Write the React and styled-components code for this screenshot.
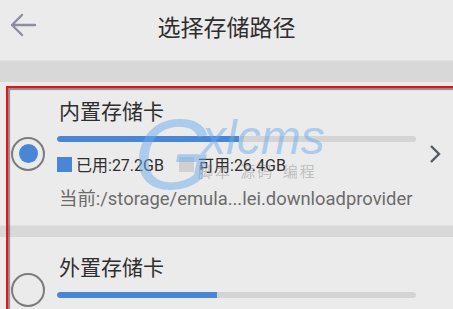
import React from "react";
import styled, { createGlobalStyle } from "styled-components";

const GlobalStyle = createGlobalStyle`
  html, body {
    margin: 0;
    padding: 0;
    background: #ebebeb;
    overflow: hidden;
  }
  body {
    font-family: Roboto, "Noto Sans CJK SC", sans-serif;
    color: #333;
  }
`;

const Page = styled.div`
  position: relative;
  width: 453px;
  height: 309px;
  overflow: hidden;
  background: #ebebeb;
`;

const Header = styled.div`
  display: grid;
  grid-template-columns: 60px 1fr 60px;
  align-items: center;
  height: 60px;
  background: #ebebeb;
`;

const BackButton = styled.div`
  display: flex;
  align-items: center;
  padding-left: 9px;
  height: 100%;
  margin-top: -10px;
`;

const Title = styled.div`
  text-align: center;
  font-size: 23px;
  color: #2e2e2e;
  margin-top: -8px;
`;

const Band = styled.div`
  height: ${(p) => p.h}px;
  background: #d8d8d8;
  border-top: 1px solid #e2e2e2;
  box-sizing: border-box;
`;

const Item = styled.div`
  display: flex;
  align-items: center;
  padding: 0 11px 0 11px;
  background: #ebebeb;
`;

const Radio = styled.div`
  flex: none;
  width: 30px;
  height: 30px;
  border-radius: 50%;
  border: 2px solid #7c7c80;
  display: flex;
  align-items: center;
  justify-content: center;
  &::after {
    content: "";
    display: ${(p) => (p.checked ? "block" : "none")};
    width: 19px;
    height: 19px;
    border-radius: 50%;
    background: #4a86d6;
  }
`;

const Body = styled.div`
  flex: 1;
  margin-left: 12px;
  padding: ${(p) => p.top}px 0 12px;
  min-width: 0;
`;

const Name = styled.div`
  font-size: 21px;
  line-height: 30px;
  color: #2e2e2e;
  padding-left: 2px;
  margin-top: 1px;
`;

const Track = styled.div`
  margin-top: 9px;
  height: 6px;
  border-radius: 3px;
  background: #d4d4d4;
  overflow: hidden;
`;

const Fill = styled.div`
  height: 100%;
  background: #4a86d6;
  border-radius: 3px 0 0 3px;
`;

const Legend = styled.div`
  display: flex;
  align-items: center;
  margin-top: 11px;
  height: 22px;
  font-size: 16px;
  color: #2e2e2e;
`;

const LegendEntry = styled.div`
  display: flex;
  align-items: center;
  width: ${(p) => p.w}px;
  gap: 4px;
`;

const Swatch = styled.span`
  width: 15px;
  height: 15px;
  background: ${(p) => p.color};
`;

const Path = styled.div`
  margin-top: 10px;
  font-size: 18.4px;
  line-height: 28px;
  color: #6b6b6b;
  padding-left: 2px;
  white-space: nowrap;
`;

const ChevronSlot = styled.div`
  flex: none;
  margin-left: 12px;
  width: 14px;
  height: 20px;
`;

const Watermark = styled.div`
  position: absolute;
  left: 130px;
  top: 100px;
  width: 200px;
  height: 90px;
  pointer-events: none;
  font-family: "Liberation Sans", sans-serif;
  font-style: italic;
  color: rgba(105, 172, 235, 0.5);
`;

const WmGlyph = styled.span`
  position: absolute;
  left: ${(p) => p.x}px;
  top: ${(p) => p.y}px;
  font-size: ${(p) => p.size}px;
  line-height: ${(p) => p.size}px;
  white-space: nowrap;
`;

const WmSub = styled.span`
  position: absolute;
  left: 68px;
  top: 61px;
  font-family: "Noto Sans CJK SC", sans-serif;
  font-style: normal;
  font-size: 15px;
  line-height: 20px;
  letter-spacing: 2px;
  word-spacing: 3px;
  white-space: nowrap;
  color: rgba(120, 120, 120, 0.4);
`;

const Highlight = styled.div`
  position: absolute;
  left: 6px;
  top: 86px;
  width: 470px;
  height: 260px;
  border: 2px solid #e8131b;
  box-shadow: inset 2px 2px 1px rgba(60, 60, 60, 0.55);
  pointer-events: none;
`;

function StorageItem({ name, used, total, legend, path, checked, top, arrow }) {
  return (
    <Item>
      <Radio checked={checked} />
      <Body top={top}>
        <Name>{name}</Name>
        <Track>
          <Fill style={{ width: `${(used / total) * 100}%` }} />
        </Track>
        {legend && (
          <Legend>
            <LegendEntry w={122}>
              <Swatch color="#4a86d6" />
              {legend[0]}
            </LegendEntry>
            <LegendEntry w={120}>
              <Swatch color="#d0d0d0" />
              {legend[1]}
            </LegendEntry>
          </Legend>
        )}
        {path && <Path>{path}</Path>}
      </Body>
      <ChevronSlot>
        {arrow && (
          <svg width="14" height="20" viewBox="0 0 14 20">
            <polyline points="3,2 11,10 3,18" fill="none" stroke="#555a66" strokeWidth="2.4" />
          </svg>
        )}
      </ChevronSlot>
    </Item>
  );
}

export default function App() {
  return (
    <>
      <GlobalStyle />
      <Page>
        <Header>
          <BackButton>
            <svg width="28" height="26" viewBox="0 0 28 26">
              <path
                d="M3 13 H26 M13 3 L3 13 L13 23"
                fill="none"
                stroke="#8d8da0"
                strokeWidth="2.4"
                strokeLinecap="round"
                strokeLinejoin="round"
              />
            </svg>
          </BackButton>
          <Title>选择存储路径</Title>
          <div />
        </Header>
        <Band h={22} />
        <StorageItem
          name="内置存储卡"
          used={27.2}
          total={53.6}
          legend={["已用:27.2GB", "可用:26.4GB"]}
          path="当前:/storage/emula...lei.downloadprovider"
          checked
          arrow
          top={14}
        />
        <Band h={12} />
        <StorageItem name="外置存储卡" used={44.6} total={100} legend={["已用:12.1GB", "可用:16.0GB"]} top={15} />
        <Watermark>
          <WmGlyph x={4} y={4} size={100}>G</WmGlyph>
          <WmGlyph x={72} y={14} size={48}>xlcms</WmGlyph>
          <WmSub>脚本 源码 编程</WmSub>
        </Watermark>
        <Highlight />
      </Page>
    </>
  );
}
